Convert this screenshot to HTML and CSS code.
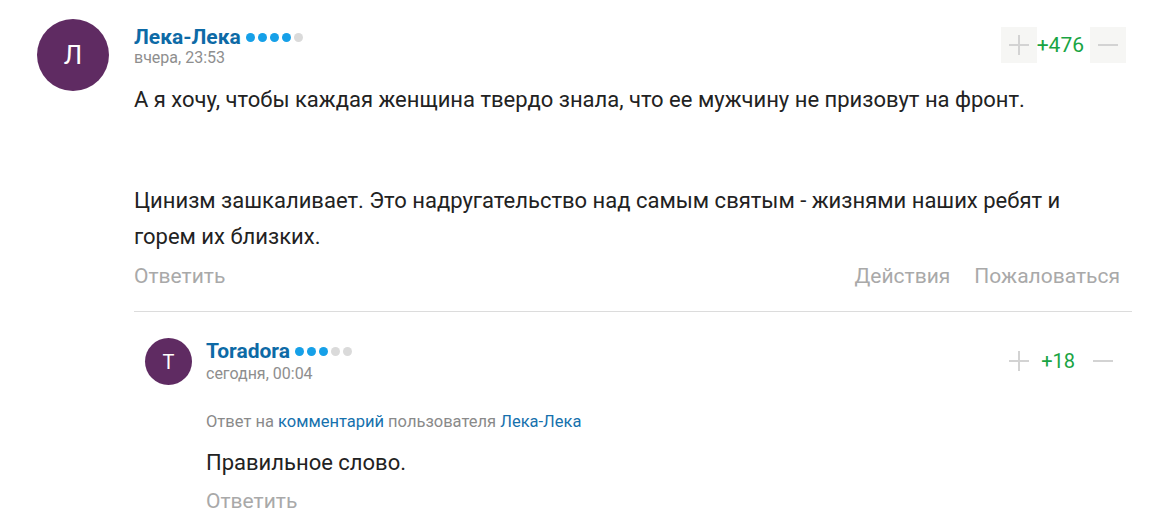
FILE: index.html
```html
<!DOCTYPE html>
<html lang="ru">
<head>
<meta charset="utf-8">
<link rel="stylesheet" href="styles.css">
</head>
<body>
<div class="thread">
  <div class="comment">
    <div class="avatar avatar-lg">Л</div>
    <div class="body">
      <div class="head">
        <div class="who">
          <div class="name-row">
            <a class="name">Лека-Лека</a>
            <span class="dots"><i class="on"></i><i class="on"></i><i class="on"></i><i class="on"></i><i></i></span>
          </div>
          <div class="date">вчера, 23:53</div>
        </div>
        <div class="rating boxed">
          <span class="btn plus"></span>
          <span class="score">+476</span>
          <span class="btn minus"></span>
        </div>
      </div>
      <div class="text">
        <p>А я хочу, чтобы каждая женщина твердо знала, что ее мужчину не призовут на фронт.</p>
        <p class="second">Цинизм зашкаливает. Это надругательство над самым святым - жизнями наших ребят и горем их близких.</p>
      </div>
      <div class="actions">
        <a class="act">Ответить</a>
        <div class="right">
          <a class="act">Действия</a>
          <a class="act">Пожаловаться</a>
        </div>
      </div>
      <div class="sep"></div>
    </div>
  </div>

  <div class="comment reply">
    <div class="avatar avatar-sm">T</div>
    <div class="body">
      <div class="head">
        <div class="who">
          <div class="name-row">
            <a class="name">Toradora</a>
            <span class="dots"><i class="on"></i><i class="on"></i><i class="on"></i><i></i><i></i></span>
          </div>
          <div class="date">сегодня, 00:04</div>
        </div>
        <div class="rating">
          <span class="btn plus"></span>
          <span class="score">+18</span>
          <span class="btn minus"></span>
        </div>
      </div>
      <div class="reply-to">Ответ на <a>комментарий</a> пользователя <a>Лека-Лека</a></div>
      <div class="text small-gap"><p>Правильное слово.</p></div>
      <div class="actions"><a class="act">Ответить</a></div>
    </div>
  </div>
</div>
</body>
</html>
```
FILE: styles.css
```css
* { box-sizing: border-box; }
html, body { margin: 0; background: #fff; }
body {
  font-family: Roboto, "Noto Sans", Arial, sans-serif;
  color: #222;
  width: 1158px;
  height: 524px;
  overflow: hidden;
}
.thread { padding: 19px 26px 0 37px; }
.comment { display: flex; }
.avatar {
  flex: none;
  border-radius: 50%;
  background: #5f2b62;
  color: #fff;
  display: flex;
  align-items: center;
  justify-content: center;
}
.avatar-lg { width: 72px; height: 72px; font-size: 26px; margin-right: 25px; }
.avatar-sm { width: 47px; height: 47px; font-size: 20px; margin-right: 14px; }
.body { flex: 1; min-width: 0; }
.head { display: flex; justify-content: space-between; align-items: flex-start; }
.name-row { display: flex; align-items: center; height: 24px; margin-top: 6px; }
.name { color: #0d6aa6; font-weight: 700; font-size: 21px; }
.dots { display: flex; gap: 3px; margin-left: 5px; margin-top: 1px; }
.dots i { width: 9px; height: 9px; border-radius: 50%; background: #dadada; display: block; }
.dots i.on { background: #16a0e8; }
.date { color: #8e8e8e; font-size: 16px; line-height: 18px; }
.rating { display: flex; align-items: center; margin-top: 8px; margin-right: 6px; }
.rating .score { color: #19a443; font-size: 21px; }
.btn { position: relative; width: 36px; height: 36px; display: block; }
.btn::before, .btn.plus::after {
  content: ""; position: absolute; background: #d3d3d3;
  left: 8px; right: 8px; top: 17px; height: 2px;
}
.btn.plus::after { left: 17px; width: 2px; right: auto; top: 8px; height: 20px; }
.boxed .btn { background: #f6f6f4; }
.boxed .score { margin: 0 6px 0 0; }
.text { font-size: 22px; line-height: 36px; margin-top: 15px; max-width: 950px; }
.text p { margin: 0; }
.text .second { margin-top: 65px; }
.actions { display: flex; justify-content: space-between; font-size: 21px; line-height: 40px; color: #a9a9a9; margin-top: 1px; }
.actions .right { display: flex; gap: 24px; margin-right: 12px; }
.sep { height: 1px; background: #dcdcdc; margin-top: 15px; }
.reply { margin-top: 26px; padding-left: 108px; }
.reply .name-row { height: 26px; margin-top: 0; }
.reply .date { line-height: 20px; }
.reply .rating { margin-top: 5px; margin-right: 11px; }
.reply .rating .score { font-size: 20px; margin: 0 10px 0 4px; }
.reply-to { font-size: 16.5px; color: #8a8a8a; margin-top: 28px; line-height: 20px; }
.reply-to a { color: #1671ad; }
.reply .text { margin-top: 13px; }
.reply .actions { margin-top: 0; }
```
